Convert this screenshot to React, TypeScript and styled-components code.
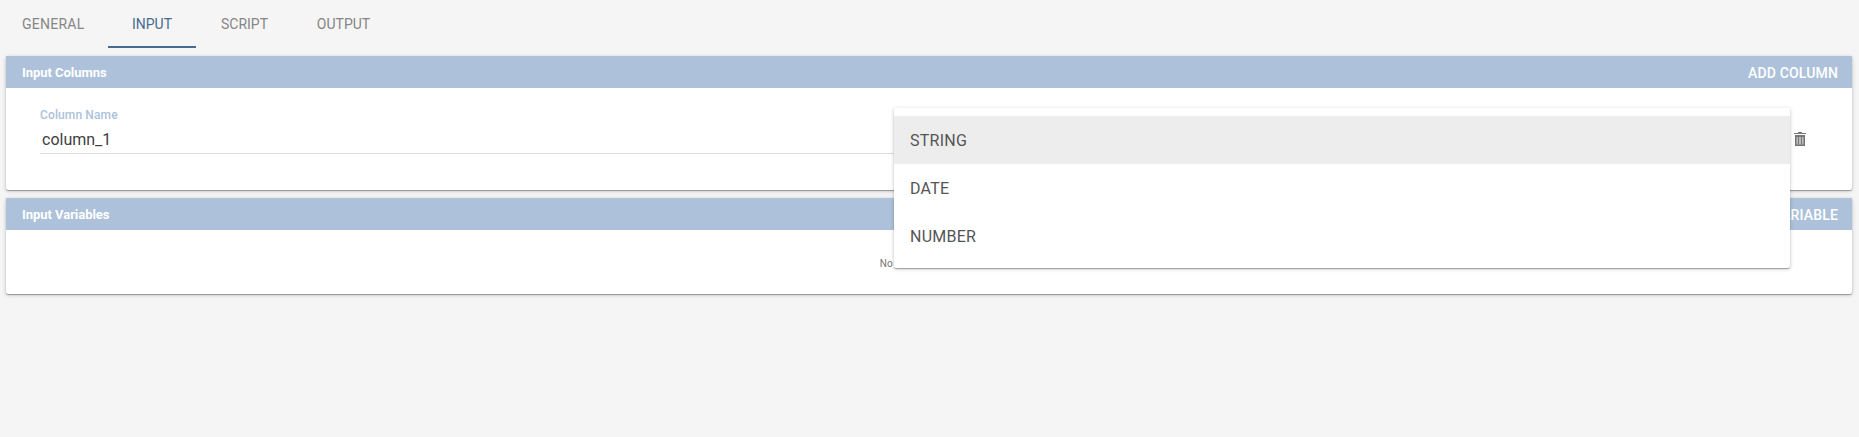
import React from "react";
import styled, { createGlobalStyle } from "styled-components";

const GlobalStyle = createGlobalStyle`
  *, *::before, *::after { box-sizing: border-box; }
  body {
    margin: 0;
    min-height: 100vh;
    background: #f5f5f5;
    font-family: Roboto, "Liberation Sans", sans-serif;
    overflow: hidden;
  }
`;

const shadow = "0 1px 1px rgba(0,0,0,.3), 0 1px 4px rgba(0,0,0,.2)";

const Tabs = styled.nav`
  display: flex;
  height: 48px;
`;

const Tab = styled.button<{ $active?: boolean; $width: number; $spacing?: number }>`
  width: ${(p) => p.$width}px;
  padding: 2px 0 0;
  border: 0;
  border-bottom: 2px solid ${(p) => (p.$active ? "#466b91" : "transparent")};
  background: none;
  color: ${(p) => (p.$active ? "#466b91" : "#868686")};
  font: 400 14px/44px Roboto, sans-serif;
  letter-spacing: ${(p) => p.$spacing ?? 0}px;
  text-transform: uppercase;

  &:first-child {
    padding: 2px 0 0 22px;
    text-align: left;
  }
`;

const Panels = styled.main`
  display: flex;
  flex-direction: column;
  gap: 8px;
  padding: 8px 7px 0 6px;
`;

const Card = styled.section`
  background: #fff;
  border-radius: 2px;
  box-shadow: ${shadow};
`;

const CardHeader = styled.header`
  display: flex;
  justify-content: space-between;
  height: 32px;
  padding: 1px 14px 0 16px;
  background: #adc2da;
  color: #fff;
  line-height: 32px;
`;

const Title = styled.h2`
  margin: 0;
  font-size: 13px;
  font-weight: 700;
  line-height: 32px;
  letter-spacing: -0.04px;
`;

const Action = styled.button`
  padding: 0;
  border: 0;
  background: none;
  color: #fff;
  font: 500 14px/32px Roboto, sans-serif;
  letter-spacing: 0.15px;
`;

const ColumnRow = styled.div`
  display: flex;
  height: 102px;
  padding: 18px 46px 0 34px;
`;

const Field = styled.label`
  display: block;
  width: 854px;
  height: 48px;
  border-bottom: 1px solid #dcdcdc;
`;

const FieldName = styled.span`
  display: block;
  color: #adc2da;
  font-size: 12px;
  font-weight: 500;
  line-height: 18px;
  letter-spacing: 0.12px;
`;

const FieldValue = styled.span`
  display: block;
  padding-left: 2px;
  color: #404040;
  font-size: 16px;
  line-height: 32px;
`;

const DeleteButton = styled.button`
  display: flex;
  height: 15px;
  margin: 26px 0 0 auto;
  padding: 0;
  border: 0;
  background: none;
  color: #757575;
`;

const Empty = styled.p`
  height: 64px;
  margin: 0;
  padding-top: 1px;
  color: #757575;
  font-size: 10px;
  line-height: 66px;
  letter-spacing: 0.06px;
  text-align: center;
`;

const Menu = styled.div`
  position: absolute;
  top: 108px;
  left: 894px;
  width: 896px;
  padding: 8px 0;
  background: #fff;
  border-radius: 2px;
  box-shadow: ${shadow};
`;

const Option = styled.div<{ $selected?: boolean }>`
  height: 48px;
  padding: 1px 16px 0;
  background: ${(p) => (p.$selected ? "#ededed" : "#fff")};
  color: #555;
  font-size: 16px;
  line-height: 48px;
  letter-spacing: 0.25px;
`;

const TrashIcon = () => (
  <svg width="12" height="14" viewBox="0 0 12 14" fill="currentColor">
    <path d="M4 0h4v1h4v1H0V1h4z" />
    <path d="M2 4h8v9H2z" fill="#bdbdbd" />
    <path d="M1 3h10v11H1zM2.5 5v7.5h7V5z" fillRule="evenodd" />
    <path d="M4 5h1v7.5H4zM7 5h1v7.5H7z" />
  </svg>
);

export default function App() {
  return (
    <>
      <GlobalStyle />
      <Tabs>
        <Tab $width={108} $spacing={0.25}>General</Tab>
        <Tab $width={88} $active>Input</Tab>
        <Tab $width={97}>Script</Tab>
        <Tab $width={101}>Output</Tab>
      </Tabs>
      <Panels>
        <Card>
          <CardHeader>
            <Title>Input Columns</Title>
            <Action>ADD COLUMN</Action>
          </CardHeader>
          <ColumnRow>
            <Field>
              <FieldName>Column Name</FieldName>
              <FieldValue>column_1</FieldValue>
            </Field>
            <DeleteButton aria-label="Delete column">
              <TrashIcon />
            </DeleteButton>
          </ColumnRow>
        </Card>
        <Card>
          <CardHeader>
            <Title>Input Variables</Title>
            <Action>ADD VARIABLE</Action>
          </CardHeader>
          <Empty>No variables available</Empty>
        </Card>
      </Panels>
      <Menu role="listbox">
        <Option $selected>STRING</Option>
        <Option>DATE</Option>
        <Option>NUMBER</Option>
      </Menu>
    </>
  );
}
